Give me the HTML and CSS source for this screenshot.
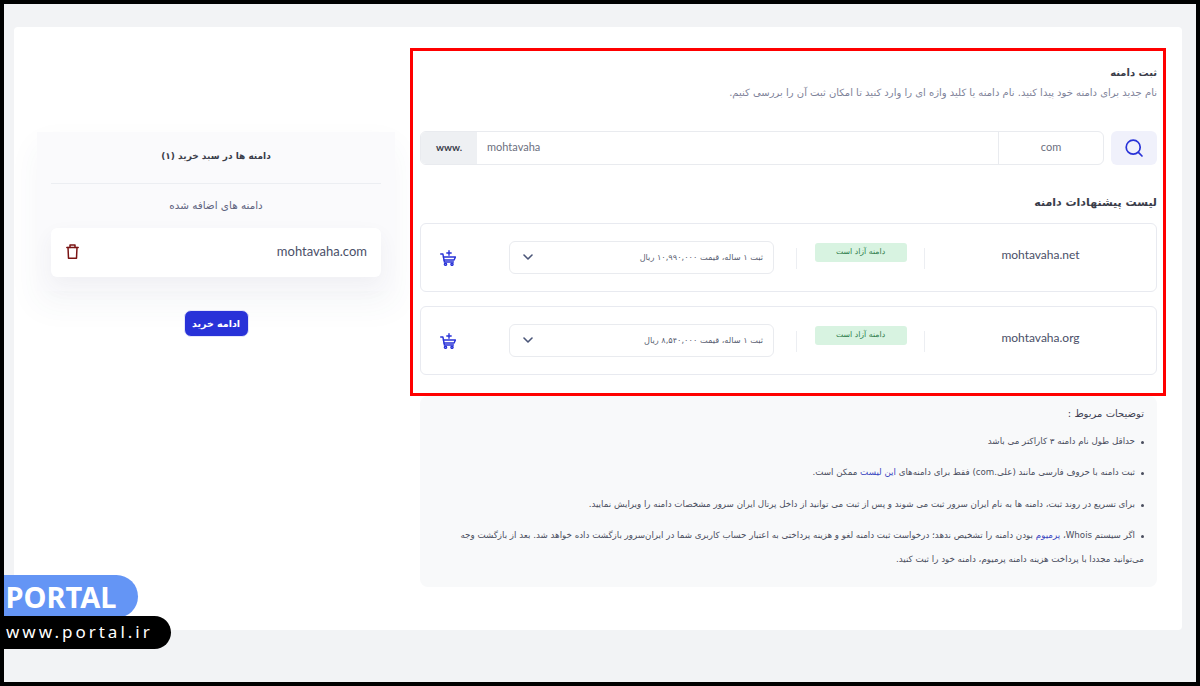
FILE: index.html
```html
<!DOCTYPE html>
<html lang="fa" dir="rtl">
<head>
    <meta charset="UTF-8">
    <meta name="viewport" content="width=device-width, initial-scale=1.0">
    <title>ثبت دامنه</title>
    <link rel="stylesheet" href="styles.css">
</head>
<body>
    <div class="card">
        <main class="main-col">
            <h1 class="page-title">ثبت دامنه</h1>
            <p class="page-sub">نام جدید برای دامنه خود پیدا کنید. نام دامنه یا کلید واژه ای را وارد کنید تا امکان ثبت آن را بررسی کنیم.</p>

            <div class="search-row">
                <button class="search-btn" aria-label="جستجو">
                    <svg width="20" height="20" viewBox="0 0 20 20" fill="none" stroke="#2832d8" stroke-width="1.7" stroke-linecap="round">
                        <circle cx="9.2" cy="9.2" r="7"/>
                        <path d="M14.4 14.4L18 18"/>
                    </svg>
                </button>
                <div class="search-group">
                    <div class="tld">com</div>
                    <div class="domain-input">mohtavaha</div>
                    <div class="www">www.</div>
                </div>
            </div>

            <h2 class="list-title">لیست پیشنهادات دامنه</h2>

            <div class="domain-row">
                <div class="domain-name">mohtavaha.net</div>
                <div class="status-cell"><span class="badge">دامنه آزاد است</span></div>
                <div class="price-select">
                    <span>ثبت ۱ ساله، قیمت ۱۰,۹۹۰,۰۰۰ ریال</span>
                    <svg width="10" height="6" viewBox="0 0 10 6" fill="none" stroke="#4a5578" stroke-width="1.6" stroke-linecap="round" stroke-linejoin="round"><path d="M1 1l4 4 4-4"/></svg>
                </div>
                <div class="cart-cell">
                    <svg width="16" height="16" viewBox="0 0 16 16" fill="none" stroke="#2832d8" stroke-width="1.4" stroke-linecap="round" stroke-linejoin="round">
                        <path d="M.7 4h2.2l1.5 8h9"/>
                        <path d="M3.4 7h12l-1.3 3H4"/>
                        <path d="M9 .8v4.4M6.8 3h4.4"/>
                        <circle cx="5.5" cy="14.3" r="1.1"/>
                        <circle cx="12" cy="14.3" r="1.1"/>
                    </svg>
                </div>
            </div>

            <div class="domain-row">
                <div class="domain-name">mohtavaha.org</div>
                <div class="status-cell"><span class="badge">دامنه آزاد است</span></div>
                <div class="price-select">
                    <span>ثبت ۱ ساله، قیمت ۸,۵۴۰,۰۰۰ ریال</span>
                    <svg width="10" height="6" viewBox="0 0 10 6" fill="none" stroke="#4a5578" stroke-width="1.6" stroke-linecap="round" stroke-linejoin="round"><path d="M1 1l4 4 4-4"/></svg>
                </div>
                <div class="cart-cell">
                    <svg width="16" height="16" viewBox="0 0 16 16" fill="none" stroke="#2832d8" stroke-width="1.4" stroke-linecap="round" stroke-linejoin="round">
                        <path d="M.7 4h2.2l1.5 8h9"/>
                        <path d="M3.4 7h12l-1.3 3H4"/>
                        <path d="M9 .8v4.4M6.8 3h4.4"/>
                        <circle cx="5.5" cy="14.3" r="1.1"/>
                        <circle cx="12" cy="14.3" r="1.1"/>
                    </svg>
                </div>
            </div>

            <section class="notes">
                <h3 class="notes-title">توضیحات مربوط :</h3>
                <ul>
                    <li>حداقل طول نام دامنه ۳ کاراکتر می باشد</li>
                    <li>ثبت دامنه با حروف فارسی مانند (علی.com) فقط برای دامنه‌های <a href="#">این لیست</a> ممکن است.</li>
                    <li>برای تسریع در روند ثبت، دامنه ها به نام ایران سرور ثبت می شوند و پس از ثبت می توانید از داخل پرتال ایران سرور مشخصات دامنه را ویرایش نمایید.</li>
                    <li>اگر سیستم Whois، <a href="#">پرمیوم</a> بودن دامنه را تشخیص ندهد؛ درخواست ثبت دامنه لغو و هزینه پرداختی به اعتبار حساب کاربری شما در ایران‌سرور بازگشت داده خواهد شد. بعد از بازگشت وجه<br>می‌توانید مجددا با پرداخت هزینه دامنه پرمیوم، دامنه خود را ثبت کنید.</li>
                </ul>
            </section>
        </main>

        <aside class="side-col">
            <div class="cart-box">
                <h3 class="cart-title">دامنه ها در سبد خرید (۱)</h3>
                <p class="cart-sub">دامنه های اضافه شده</p>
                <div class="cart-item">
                    <span class="cart-domain">mohtavaha.com</span>
                    <svg class="trash" width="13" height="15" viewBox="0 0 13 15" fill="none" stroke="#7a1414" stroke-width="1.5" stroke-linecap="round" stroke-linejoin="round">
                        <path d="M.8 3.5h11.4"/>
                        <path d="M4 3.5V1h5v2.5"/>
                        <path d="M2 3.5l.5 10.7h8L11 3.5"/>
                    </svg>
                </div>
            </div>
            <button class="continue-btn">ادامه خرید</button>
        </aside>
    </div>

    <!-- highlight and watermark sit on top of the page -->
    <div class="highlight"></div>
    <div class="brand">
        <div class="brand-name">PORTAL</div>
        <div class="brand-url">www.portal.ir</div>
    </div>
</body>
</html>
```

FILE: styles.css
```css
* {
    margin: 0;
    padding: 0;
    box-sizing: border-box;
}

body {
    position: relative;
    width: 1200px;
    height: 686px;
    overflow: hidden;
    border: 4px solid #000;
    background: #f2f3f5;
    padding: 23px 14px 0 10px;
    font-family: "DejaVu Sans", sans-serif;
    color: #3f4254;
}

.card {
    display: grid;
    grid-template-columns: 737px 358px;
    column-gap: 25px;
    height: 603px;
    padding: 38px 25px 0 23px;
    background: #fff;
    border-radius: 4px;
}

.page-title {
    font-size: 10px;
    font-weight: 700;
    line-height: 16px;
    color: #3a3d4a;
}

.page-sub {
    margin-top: 4px;
    font-size: 10px;
    line-height: 16px;
    color: #7e8299;
}

.search-row {
    display: flex;
    gap: 7px;
    height: 34px;
    margin-top: 30px;
}

.search-btn {
    display: flex;
    align-items: center;
    justify-content: center;
    width: 46px;
    border: none;
    border-radius: 6px;
    background: #f0f1fb;
}

.search-group {
    display: flex;
    flex: 1;
    border: 1px solid #e9ebef;
    border-radius: 6px;
    overflow: hidden;
    font-family: Lato, sans-serif;
    font-size: 11px;
}

.tld {
    width: 105px;
    border-left: 1px solid #e9ebef;
    line-height: 30px;
    text-align: center;
    color: #6c7080;
}

.domain-input {
    flex: 1;
    direction: ltr;
    padding-left: 10px;
    line-height: 30px;
    color: #6c7080;
}

.www {
    width: 56px;
    background: #eef0f3;
    font-size: 10px;
    font-weight: 700;
    line-height: 30px;
    text-align: center;
    direction: ltr;
    color: #3a3d4a;
}

.list-title {
    margin-top: 29px;
    font-size: 11px;
    font-weight: 700;
    line-height: 18px;
    color: #3a3d4a;
}

.domain-row {
    display: flex;
    height: 69px;
    margin-top: 11px;
    padding-top: 17px;
    border: 1.5px solid #e8eaf0;
    border-radius: 6px;
}

.domain-row + .domain-row {
    margin-top: 14px;
}

.domain-name {
    width: 231px;
    padding-top: 3px;
    font-family: Lato, sans-serif;
    font-size: 12px;
    line-height: 22px;
    text-align: center;
    direction: ltr;
    color: #4a4f68;
}

.status-cell {
    display: flex;
    justify-content: center;
    width: 129px;
    height: 21px;
    margin-top: 7px;
    border-right: 1px solid #eceef2;
    border-left: 1px solid #eceef2;
}

.badge {
    width: 92px;
    height: 19px;
    margin-top: -5px;
    background: #d8f3e1;
    border-radius: 3px;
    font-size: 7.8px;
    line-height: 17px;
    text-align: center;
    color: #2f7d4c;
}

.price-select {
    display: flex;
    align-items: center;
    justify-content: space-between;
    width: 265px;
    height: 33px;
    margin-right: 22px;
    padding: 0 10px 1px 13px;
    border: 1px solid #e9ebef;
    border-radius: 6px;
    font-size: 8.2px;
    color: #5a5f73;
}

.cart-cell {
    margin-right: 53px;
    padding-top: 9px;
    line-height: 0;
}

.notes {
    height: 191px;
    margin-top: 21px;
    padding: 10px 13px 0;
    background: #f8f9fa;
    border-radius: 8px;
}

.notes-title {
    font-size: 10px;
    font-weight: 400;
    line-height: 16px;
    color: #3f4254;
}

.notes ul {
    margin-top: 7px;
    list-style: none;
    font-size: 8.7px;
    line-height: 24px;
    color: #4a4e5e;
}

.notes li {
    margin-bottom: 7.4px;
}

.notes li::before {
    content: "";
    display: inline-block;
    width: 3px;
    height: 3px;
    margin-left: 6px;
    background: #4a4e5e;
    border-radius: 50%;
}

.notes a {
    color: #3a46c0;
    text-decoration: none;
}

.side-col {
    display: flex;
    flex-direction: column;
    align-items: center;
    padding-top: 67px;
}

.cart-box {
    width: 358px;
    height: 159px;
    padding: 0 14px;
    background: #fafafc;
    box-shadow: 0 14px 30px rgba(60, 70, 110, 0.05);
}

.cart-title {
    height: 52px;
    border-bottom: 1px solid #eceef2;
    font-size: 9px;
    font-weight: 700;
    line-height: 48px;
    text-align: center;
    color: #3a3d4a;
}

.cart-sub {
    margin-top: 13px;
    font-size: 10.4px;
    line-height: 16px;
    text-align: center;
    color: #5f6480;
}

.cart-item {
    display: flex;
    align-items: center;
    justify-content: space-between;
    height: 49px;
    margin-top: 15px;
    padding: 0 14px 3px;
    background: #fff;
    border-radius: 6px;
    box-shadow: 0 8px 20px rgba(60, 70, 110, 0.06);
}

.cart-domain {
    font-family: Lato, sans-serif;
    font-size: 13px;
    direction: ltr;
    color: #4a4f68;
}

.trash {
    margin-left: 1px;
}

.continue-btn {
    width: 65px;
    height: 27px;
    margin-top: 19px;
    border: 1px solid #e4e6fb;
    border-radius: 7px;
    background: #2832d8;
    font-family: "DejaVu Sans", sans-serif;
    font-size: 9.5px;
    font-weight: 700;
    color: #fff;
}

.highlight {
    position: absolute;
    top: 44px;
    left: 406px;
    width: 756px;
    height: 348px;
    border: 3px solid #f00;
}

.brand {
    position: absolute;
    top: 571px;
    left: 0;
    direction: ltr;
}

.brand-name {
    width: 134px;
    height: 43px;
    padding-left: 1.5px;
    background: #6495f5;
    border-radius: 0 24px 24px 0;
    font-family: "Noto Sans", sans-serif;
    font-size: 29px;
    font-weight: 700;
    line-height: 43px;
    color: #fff;
}

.brand-url {
    width: 167px;
    height: 33px;
    margin-top: -2px;
    padding-left: 2px;
    background: #000;
    border-radius: 0 17px 17px 0;
    font-family: "Noto Sans", sans-serif;
    font-size: 17px;
    letter-spacing: 3px;
    line-height: 32px;
    color: #fff;
}
```
